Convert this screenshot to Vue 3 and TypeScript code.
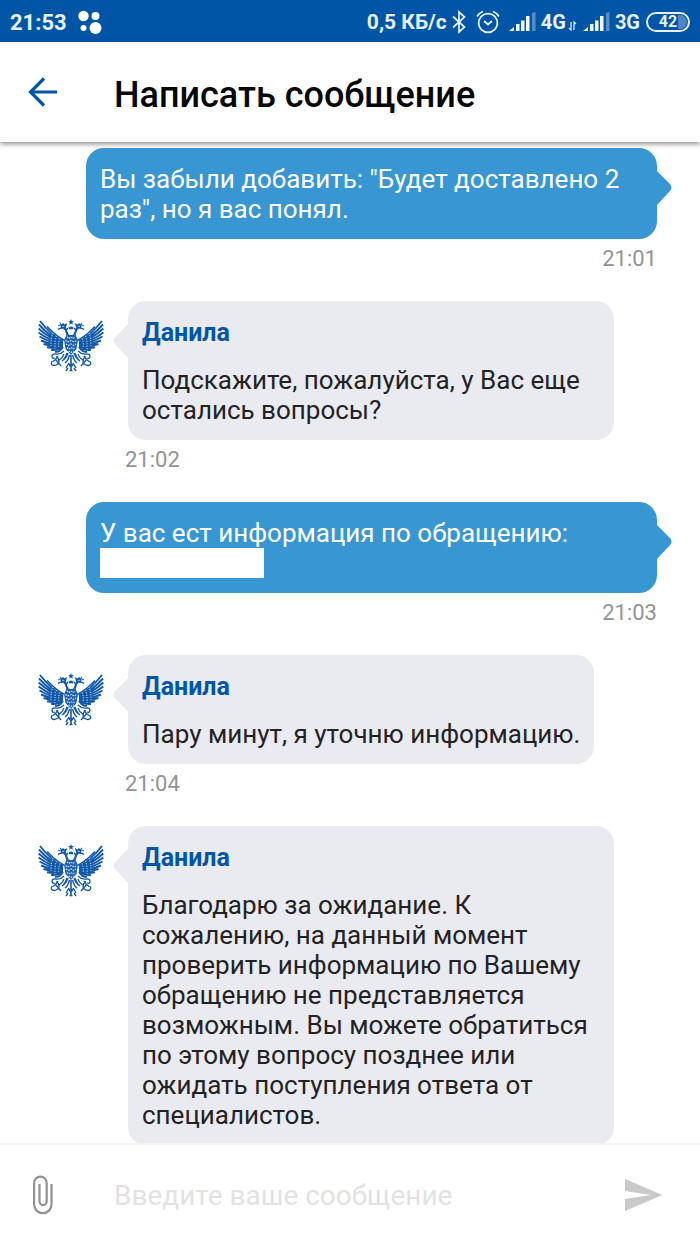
<script setup lang="ts">
import { ref } from 'vue'

interface Message {
  id: number
  author?: string
  text: string
  time?: string
  redacted?: boolean
}

const messages: Message[] = [
  { id: 1, text: 'Вы забыли добавить: "Будет доставлено 2 раз", но я вас понял.', time: '21:01' },
  { id: 2, author: 'Данила', text: 'Подскажите, пожалуйста, у Вас еще остались вопросы?', time: '21:02' },
  { id: 3, text: 'У вас ест информация по обращению:', time: '21:03', redacted: true },
  { id: 4, author: 'Данила', text: 'Пару минут, я уточню информацию.', time: '21:04' },
  {
    id: 5,
    author: 'Данила',
    text: 'Благодарю за ожидание. К сожалению, на данный момент проверить информацию по Вашему обращению не представляется возможным. Вы можете обратиться по этому вопросу позднее или ожидать поступления ответа от специалистов.',
  },
]

const draft = ref('')
</script>

<template>
  <div class="screen">
    <div class="status">
      <span class="clock">21:53</span>
      <svg class="dots" width="24" height="24" viewBox="0 0 24 24" fill="#fff">
        <circle cx="5.5" cy="6" r="5.2" /><circle cx="17.5" cy="6" r="4" />
        <circle cx="5.5" cy="18" r="3" /><circle cx="17.5" cy="18" r="6" />
      </svg>
      <span class="speed">0,5 КБ/с</span>
      <svg class="bt" width="16" height="24" viewBox="0 0 16 24" fill="none" stroke="#e6f0fb" stroke-width="1.7">
        <path d="M2 6.5 13.5 17 8 22V2l5.5 5L2 17.5" />
      </svg>
      <svg class="alarm" width="24" height="24" viewBox="0 0 24 24" fill="none" stroke="#e6f0fb" stroke-width="1.8">
        <circle cx="12" cy="13" r="9.4" /><path d="M1 6.5Q3 3 7 1.5M23 6.5Q21 3 17 1.5M8 11l4 3.5 4-3.5" />
      </svg>
      <svg class="signal" width="27" height="20" viewBox="0 0 27 20" fill="#f2f7fd">
        <path d="M0 19l5-4v4zM7 12h3.5v7H7zM12 8.5h3.5V19H12zM17 4h3.5v15H17z" /><path d="M23 1l3.5-1v19H23z" opacity=".35" />
      </svg>
      <span class="net">4G</span>
      <svg class="arrows" width="9" height="10" viewBox="0 0 9 10" fill="none" stroke="#d4e4f5" stroke-width="1.3">
        <path d="M3 1v8L1 7M6 9V1l2 2" />
      </svg>
      <svg class="signal second" width="27" height="20" viewBox="0 0 27 20" fill="#f2f7fd">
        <path d="M0 19l5-4v4zM7 12h3.5v7H7zM12 8.5h3.5V19H12zM17 4h3.5v15H17z" /><path d="M23 1l3.5-1v19H23z" opacity=".35" />
      </svg>
      <span class="net">3G</span>
      <span class="battery">42</span>
    </div>

    <header class="header">
      <button class="icon-button" type="button" aria-label="Назад">
        <svg width="30" height="30" viewBox="0 0 30 30" fill="none" stroke="#0055a6" stroke-width="3.2">
          <path d="M29 15H3M16 1.5 2.5 15 16 28.5" />
        </svg>
      </button>
      <h1>Написать сообщение</h1>
    </header>

    <main class="chat">
      <article v-for="m in messages" :key="m.id" class="message" :class="m.author ? 'incoming' : 'outgoing'">
        <svg v-if="m.author" class="avatar" width="66" height="54" viewBox="0 0 66 54" aria-hidden="true">
          <defs>
            <g :id="`half-${m.id}`" fill="none" stroke="#1259aa">
              <path
                stroke-width="1.9"
                d="M25 22.500Q14 17 2 2M25 23Q13 19 1 5.500M25 24Q12 20 .6 9.500M25 25Q12 22 .6 13.500M25 26Q13 24 1.500 17.500M25 26.500Q14 26 3 21.500M25 27Q15 28 5.500 25M25 27.500Q17 30 9 28.200M24 28Q19 32 13 30.800M25 28Q21 34 17 32.500"
              />
              <path stroke-width="1.5" d="M25 21.500Q17 16 9 7.500M26 21Q20 18 13 11.500" />
              <path stroke-width="1" stroke="#fff" stroke-dasharray="1 1.500" d="M15 14Q13 19 13 27M18.500 17Q16.500 22 17 30M22 19.500Q20 24 21 29" />
              <path stroke-width="2.2" d="M30 19Q30 16 28.500 13Q28 9.500 25.500 9" />
              <path stroke-width="1.500" d="M25.500 9Q22 8.500 20 10.500M23 5.500l.5 3h3.500l1-3-2 1-1-1.500-1 1.500zM20.500 6l1 1M28 11l2-2" />
              <path stroke-width="1.300" d="M26 32Q22 36 18 35Q14 34.500 14 37.500Q14.500 40 17 39M20 37Q17 42 13.500 43Q12.500 46 16 46.500Q21 46 21 42Q21 39 18 37.500M26 35Q24 40 20 41.500M17 40l6 7M29 34Q27 40 24 42" />
              <path stroke-width="1.400" d="M30 34Q29 38 25.500 41M31.500 36Q30 42 27 44M31 44l-3 5M30 49l-2 3" />
            </g>
          </defs>
          <use :href="`#half-${m.id}`" />
          <use :href="`#half-${m.id}`" transform="translate(66 0) scale(-1 1)" />
          <path d="M33 0l.8 2 2.200.2-1.700 1.400.5 2.200L33 4.600l-1.800 1.200.5-2.200L30 2.200l2.200-.2z" fill="#1259aa" />
          <path d="M30.500 7.500l1.500.8 1-1.300 1 1.300 1.500-.8-.6 2.700h-3.800z" fill="#1259aa" />
          <path d="M29 15q4 2 8 0l3 6-1.500 9L33 36l-5.500-6L26 21z" fill="#1f63b0" />
          <path
            d="M29 18l2 1.500 2-1.500 2 1.500 2-1.500M27.500 21.500l2 1.500 3.500-1.500 3.500 1.500 2-1.500M28 25l2.500 1.500L33 25l2.500 1.500L38 25M29 28.500l2 1.500 2-1.500 2 1.500 2-1.500M30.500 32l2.500 1.500 2.500-1.500"
            fill="none"
            stroke="#d7e5f4"
            stroke-width="1.100"
            stroke-dasharray="1.600 1"
          />
          <path d="M33 36v10M31 45l2 3 2-3M31.500 51.500h3M33 47v5" fill="none" stroke="#1259aa" stroke-width="1.600" />
        </svg>
        <div class="bubble">
          <svg class="tail" width="15" height="34" viewBox="0 0 15 34" aria-hidden="true">
            <path d="M0 0 13 13Q16 17 13 20L0 34z" />
          </svg>
          <h2 v-if="m.author">{{ m.author }}</h2>
          <p>{{ m.text }}</p>
          <div v-if="m.redacted" class="redacted"></div>
        </div>
        <time v-if="m.time">{{ m.time }}</time>
      </article>
    </main>

    <form class="composer" @submit.prevent>
      <button class="icon-button" type="button" aria-label="Прикрепить файл">
        <svg width="20" height="40" viewBox="0 0 20 40" fill="none" stroke="#929292" stroke-width="2.2">
          <path d="M18.5 9v20.5a8.7 8.7 0 0 1-17.4 0V8a6.3 6.3 0 0 1 12.6 0v18.5a3.6 3.6 0 0 1-7.2 0V9" />
        </svg>
      </button>
      <input v-model="draft" type="text" aria-label="Сообщение" placeholder="Введите ваше сообщение" />
      <button class="send" type="submit" aria-label="Отправить">
        <svg width="38" height="32" viewBox="0 0 38 32" fill="#cacaca"><path d="M0 0 37.5 16 0 32V20l26-4-26-4z" /></svg>
      </button>
    </form>
  </div>
</template>

<style>
body {
  margin: 0;
}
</style>

<style scoped>
.screen {
  display: flex;
  flex-direction: column;
  height: 100vh;
  overflow: hidden;
  background: #fff;
  font-family: Roboto, 'Noto Sans', sans-serif;
  color: #222226;
}
.status {
  display: flex;
  align-items: center;
  flex: none;
  height: 42px;
  box-sizing: border-box;
  padding: 2px 10px 0;
  background: #0055a6;
  color: #e6f0fb;
  font-size: 22px;
  font-weight: 700;
  white-space: nowrap;
}
.status svg {
  flex: none;
}
.dots {
  margin-left: 11px;
}
.speed {
  margin-left: auto;
  font-size: 21px;
}
.bt {
  margin-left: 4px;
}
.alarm {
  margin-left: 9px;
}
.signal {
  margin: 0 5px 0 9px;
}
.signal.second {
  margin-left: 6px;
}
.net {
  font-size: 20px;
}
.arrows {
  align-self: flex-end;
  margin-bottom: 11px;
  margin-left: 2px;
}
.battery {
  box-sizing: border-box;
  width: 44px;
  height: 20px;
  margin-left: 6px;
  border: 2px solid #e6f0fb;
  border-radius: 10px;
  background: linear-gradient(90deg, transparent 75%, #4c86c4 75%);
  background-clip: content-box;
  padding: 1px;
  font-size: 16px;
  line-height: 14px;
  text-align: center;
}
.header {
  position: relative;
  z-index: 1;
  display: flex;
  align-items: center;
  flex: none;
  height: 100px;
  background: #fff;
  box-shadow: 0 2px 5px rgba(0, 0, 0, 0.45);
}
.icon-button,
.send {
  display: flex;
  align-items: center;
  justify-content: center;
  flex: none;
  padding: 0;
  border: 0;
  background: none;
}
.icon-button {
  width: 86px;
  height: 100%;
}
h1 {
  margin: 6px 0 0 28px;
  color: #060606;
  font-size: 36px;
  font-weight: 500;
  line-height: 44px;
}
.chat {
  display: flex;
  flex: 1;
  flex-direction: column;
  gap: 22px;
  min-height: 0;
  overflow: hidden;
  padding-top: 6px;
}
.message {
  position: relative;
  display: flex;
  flex: none;
  flex-direction: column;
}
.outgoing {
  margin: 0 43px 0 86px;
}
.incoming {
  align-items: flex-start;
  margin: 0 86px 0 125px;
}
.bubble {
  position: relative;
  box-sizing: border-box;
  padding: 17px 14px 14px;
  border-radius: 18px;
}
.outgoing .bubble {
  padding-top: 16px;
  padding-bottom: 15px;
  background: #3897d3;
  color: #fff;
}
.incoming .bubble {
  margin-left: 3px;
  padding-bottom: 15px;
  background: #eaebf1;
}
.tail {
  position: absolute;
  top: 23px;
}
.outgoing .tail {
  left: 100%;
  fill: #3897d3;
}
.incoming .tail {
  right: 100%;
  fill: #eaebf1;
  transform: scaleX(-1);
}
.avatar {
  position: absolute;
  top: 18px;
  left: -87px;
}
h2 {
  margin: 0 0 17px;
  color: #0055a6;
  font-size: 25px;
  font-weight: 700;
  line-height: 30px;
}
p {
  margin: 0;
  font-size: 26px;
  line-height: 30px;
}
.redacted {
  width: 164px;
  height: 30px;
  background: #fff;
}
time {
  color: #949494;
  font-size: 22px;
  line-height: 40px;
}
.outgoing time {
  text-align: right;
}
.composer {
  display: flex;
  align-items: center;
  flex: none;
  height: 101px;
  box-sizing: border-box;
  border-top: 2px solid #f3f3f4;
}
input {
  flex: 1;
  min-width: 0;
  padding: 0;
  margin: 2px 20px 0 28px;
  border: 0;
  outline: 0;
  background: none;
  color: #222226;
  font: 28px Roboto, 'Noto Sans', sans-serif;
}
input::placeholder {
  color: #e2e2e2;
  opacity: 1;
}
.send {
  margin-right: 37px;
}
</style>
